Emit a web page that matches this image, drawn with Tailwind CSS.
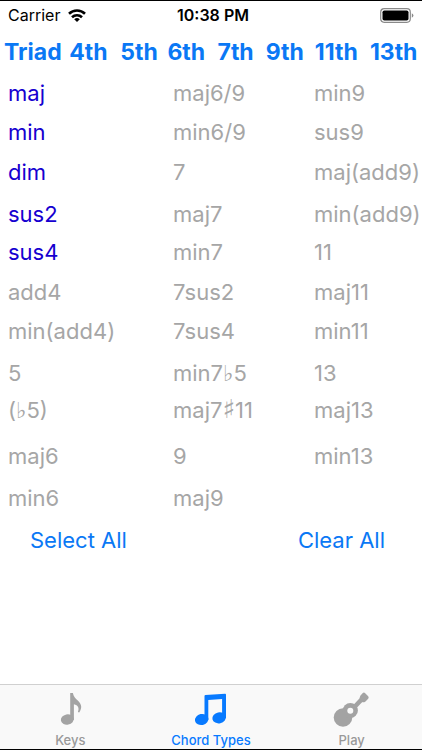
<!DOCTYPE html>
<html lang="en">
<head>
  <meta charset="UTF-8" />
  <meta name="viewport" content="width=device-width, initial-scale=1" />
  <title>Chord Types</title>
  <script src="https://cdn.jsdelivr.net/npm/@tailwindcss/browser@4"></script>
</head>
<body class="min-h-screen flex flex-col bg-white border-y border-black font-['Inter','DejaVu_Sans',sans-serif] text-[#a6a6a6]">

  <!-- Status bar -->
  <header class="grid grid-cols-3 items-center h-7 pl-2 pr-2 text-base text-black">
    <div class="flex items-center gap-2">
      <span>Carrier</span>
      <svg class="w-[18px] h-[13px]" viewBox="0 0 18 13" fill="none" stroke="#000" stroke-width="2.6">
        <path d="M1 4.8a11.5 11.5 0 0 1 16 0M4 8.200a7.2 7.2 0 0 1 10 0" />
        <path d="M9 13L6.2 10.3a4 4 0 0 1 5.6 0z" fill="#000" stroke="none" />
      </svg>
    </div>
    <span class="pl-1 text-center font-semibold whitespace-nowrap">10:38 PM</span>
    <svg class="justify-self-end w-[34px] h-[15px]" viewBox="0 0 34 15">
      <rect x="0.7" y="0.7" width="29.6" height="13.6" rx="3.5" fill="#fff" stroke="#8a8a8a" stroke-width="1.2" />
      <rect x="2.5" y="2.5" width="26" height="10" rx="1.8" fill="#000" />
      <path d="M31.8 5.2q1.6.7 1.6 2.3t-1.6 2.3z" fill="#8a8a8a" />
    </svg>
  </header>

  <!-- Chord groups -->
  <nav class="grid grid-cols-[65fr_51fr_47fr_50fr_48fr_49fr_55fr_52fr] pt-[7px] pl-1 text-[23px] leading-8 font-bold text-[#0a78f5]">
    <button class="text-left whitespace-nowrap">Triad</button>
    <button class="text-left whitespace-nowrap">4th</button>
    <button class="text-left whitespace-nowrap">5th</button>
    <button class="text-left whitespace-nowrap">6th</button>
    <button class="text-left whitespace-nowrap">7th</button>
    <button class="text-left whitespace-nowrap">9th</button>
    <button class="text-left whitespace-nowrap">11th</button>
    <button class="text-left whitespace-nowrap">13th</button>
  </nav>

  <main class="grow">
    <!-- Chord types -->
    <div class="grid grid-flow-col grid-cols-[165fr_141fr_108fr] grid-rows-[39px_40px_42px_38px_40px_39px_42px_37px_46px_42px_42px] items-start justify-items-start pt-[11px] pl-2 text-[22px] leading-7 whitespace-nowrap">
      <button class="text-[#1600d0]">maj</button>
      <button class="text-[#1600d0]">min</button>
      <button class="text-[#1600d0]">dim</button>
      <button class="text-[#1600d0]">sus2</button>
      <button class="text-[#1600d0]">sus4</button>
      <button>add4</button>
      <button>min(add4)</button>
      <button>5</button>
      <button>(♭5)</button>
      <button>maj6</button>
      <button>min6</button>

      <button>maj6/9</button>
      <button>min6/9</button>
      <button>7</button>
      <button>maj7</button>
      <button>min7</button>
      <button>7sus2</button>
      <button>7sus4</button>
      <button>min7♭5</button>
      <button>maj7<span class="text-[26px] leading-none">♯</span>11</button>
      <button>9</button>
      <button>maj9</button>

      <button>min9</button>
      <button>sus9</button>
      <button>maj(add9)</button>
      <button>min(add9)</button>
      <button>11</button>
      <button>maj11</button>
      <button>min11</button>
      <button>13</button>
      <button>maj13</button>
      <button>min13</button>
    </div>

    <div class="flex justify-between pl-[30px] pr-[37px] text-[22px] leading-7 text-[#0a78f5]">
      <button>Select All</button>
      <button>Clear All</button>
    </div>
  </main>

  <!-- Tab bar -->
  <footer class="grid grid-cols-3 h-[65px] border-t border-[#d0d0d0] bg-[#f9f9f9] text-[13px] leading-4 font-medium text-[#999]">
    <a href="#keys" class="flex flex-col items-center pt-[3px]">
      <svg class="w-11 h-11" viewBox="0 0 44 44" fill="#a3a3a3">
        <ellipse cx="19.300" cy="31.500" rx="6.500" ry="5.200" transform="rotate(-12 19.300 31.500)" />
        <path d="M22.200 5h2.700c.5 3.500 2.500 5.300 4.900 7.500 4.200 4 4.400 7.600 1.400 12l-1.300-.4c1.600-4.300.2-7-4-7.900V32h-3.700z" />
      </svg>
      <span>Keys</span>
    </a>
    <a href="#chord-types" class="flex flex-col items-center pt-[3px] text-[#087aff]">
      <svg class="w-11 h-11" viewBox="0 0 44 44" fill="#087aff">
        <path d="M15.500 8q0-1 1-1.100L36 5.700q1-.1 1 1V30h-3.900V11L19.300 12v20h-3.800z" />
        <ellipse cx="12.700" cy="31.500" rx="6.800" ry="5.500" transform="rotate(-12 12.700 31.500)" />
        <ellipse cx="30.200" cy="29.800" rx="6.900" ry="5.500" transform="rotate(-12 30.200 29.800)" />
      </svg>
      <span>Chord Types</span>
    </a>
    <a href="#play" class="flex flex-col items-center pt-[3px]">
      <svg class="w-11 h-11" viewBox="0 0 44 44" fill="#a3a3a3">
        <ellipse cx="13" cy="29.500" rx="9.300" ry="9.300" />
        <circle cx="20.300" cy="22.500" r="7.600" />
        <path d="M24 19.500L33 10" stroke="#a3a3a3" stroke-width="4.600" />
        <path d="M30.300 7.800L32.800 5q1.200-.9 2.400.2l3 3.100q1 1.300 0 2.500l-2.700 2.600q-1.700 1.200-3.600.7l-2-2q-.7-2.500.4-4.300z" />
        <circle cx="20.300" cy="22.800" r="3" fill="#f9f9f9" />
      </svg>
      <span>Play</span>
    </a>
  </footer>

</body>
</html>
